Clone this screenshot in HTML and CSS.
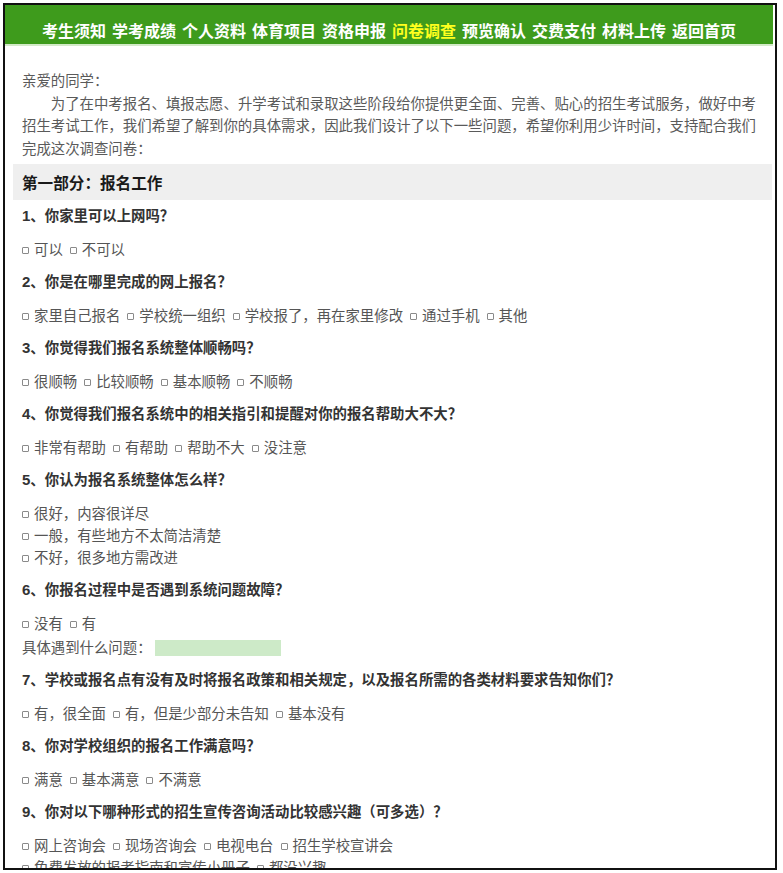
FILE: index.html
```html
<!DOCTYPE html>
<html lang="zh-CN">
<head>
<meta charset="utf-8">
<title>问卷调查</title>
<link rel="stylesheet" href="styles.css">
</head>
<body>
<div class="page">
  <nav class="topnav">
    <a>考生须知</a><a>学考成绩</a><a>个人资料</a><a>体育项目</a><a>资格申报</a><a class="active">问卷调查</a><a>预览确认</a><a>交费支付</a><a>材料上传</a><a>返回首页</a>
  </nav>
  <div class="content">
    <div class="intro">
      <p class="greet">亲爱的同学：</p>
      <p class="lead">为了在中考报名、填报志愿、升学考试和录取这些阶段给你提供更全面、完善、贴心的招生考试服务，做好中考招生考试工作，我们希望了解到你的具体需求，因此我们设计了以下一些问题，希望你利用少许时间，支持配合我们完成这次调查问卷：</p>
    </div>
    <h2 class="section">第一部分：报名工作</h2>
    <div class="qlist">
      <div class="q">
        <p class="qt"><span class="num">1</span>、你家里可以上网吗？</p>
        <div class="opts"><span class="opt"><i class="cb"></i>可以</span><span class="opt"><i class="cb"></i>不可以</span></div>
      </div>
      <div class="q">
        <p class="qt"><span class="num">2</span>、你是在哪里完成的网上报名？</p>
        <div class="opts"><span class="opt"><i class="cb"></i>家里自己报名</span><span class="opt"><i class="cb"></i>学校统一组织</span><span class="opt"><i class="cb"></i>学校报了，再在家里修改</span><span class="opt"><i class="cb"></i>通过手机</span><span class="opt"><i class="cb"></i>其他</span></div>
      </div>
      <div class="q">
        <p class="qt"><span class="num">3</span>、你觉得我们报名系统整体顺畅吗？</p>
        <div class="opts"><span class="opt"><i class="cb"></i>很顺畅</span><span class="opt"><i class="cb"></i>比较顺畅</span><span class="opt"><i class="cb"></i>基本顺畅</span><span class="opt"><i class="cb"></i>不顺畅</span></div>
      </div>
      <div class="q">
        <p class="qt"><span class="num">4</span>、你觉得我们报名系统中的相关指引和提醒对你的报名帮助大不大？</p>
        <div class="opts"><span class="opt"><i class="cb"></i>非常有帮助</span><span class="opt"><i class="cb"></i>有帮助</span><span class="opt"><i class="cb"></i>帮助不大</span><span class="opt"><i class="cb"></i>没注意</span></div>
      </div>
      <div class="q">
        <p class="qt"><span class="num">5</span>、你认为报名系统整体怎么样？</p>
        <div class="opts stack"><span class="opt"><i class="cb"></i>很好，内容很详尽</span><span class="opt"><i class="cb"></i>一般，有些地方不太简洁清楚</span><span class="opt"><i class="cb"></i>不好，很多地方需改进</span></div>
      </div>
      <div class="q">
        <p class="qt"><span class="num">6</span>、你报名过程中是否遇到系统问题故障？</p>
        <div class="block gap">
          <div class="opts"><span class="opt"><i class="cb"></i>没有</span><span class="opt"><i class="cb"></i>有</span></div>
          <div class="detail">具体遇到什么问题：<input class="field" type="text"></div>
        </div>
      </div>
      <div class="q">
        <p class="qt"><span class="num">7</span>、学校或报名点有没有及时将报名政策和相关规定，以及报名所需的各类材料要求告知你们？</p>
        <div class="opts"><span class="opt"><i class="cb"></i>有，很全面</span><span class="opt"><i class="cb"></i>有，但是少部分未告知</span><span class="opt"><i class="cb"></i>基本没有</span></div>
      </div>
      <div class="q">
        <p class="qt"><span class="num">8</span>、你对学校组织的报名工作满意吗？</p>
        <div class="opts"><span class="opt"><i class="cb"></i>满意</span><span class="opt"><i class="cb"></i>基本满意</span><span class="opt"><i class="cb"></i>不满意</span></div>
      </div>
      <div class="q">
        <p class="qt"><span class="num">9</span>、你对以下哪种形式的招生宣传咨询活动比较感兴趣（可多选）？</p>
        <div class="block">
          <div class="opts"><span class="opt"><i class="cb"></i>网上咨询会</span><span class="opt"><i class="cb"></i>现场咨询会</span><span class="opt"><i class="cb"></i>电视电台</span><span class="opt"><i class="cb"></i>招生学校宣讲会</span></div>
          <div class="opts"><span class="opt"><i class="cb"></i>免费发放的报考指南和宣传小册子</span><span class="opt"><i class="cb"></i>都没兴趣</span></div>
        </div>
      </div>
    </div>
  </div>
</div>
</body>
</html>
```
FILE: styles.css
```css
html, body {
  margin: 0;
  padding: 0;
  background: #ffffff;
}

body {
  font-family: "Noto Sans CJK SC", "Noto Sans", sans-serif;
  font-size: 14.4px;
  color: #555555;
}

.page {
  box-sizing: border-box;
  width: 774px;
  height: 867px;
  margin: 3px 0 0 3px;
  border: 2px solid #111111;
  overflow: hidden;
  background: #ffffff;
}

.topnav {
  display: flex;
  justify-content: center;
  gap: 6px;
  height: 41px;
  box-sizing: border-box;
  padding-top: 14px;
  margin-right: 2px;
  background: #3e9b1c;
  border-bottom: 2px solid #d3eac8;
  font-family: "Noto Sans CJK SC", sans-serif;
  font-weight: 700;
  font-size: 16px;
  line-height: 22px;
}

.topnav a {
  color: #ffffff;
  text-decoration: none;
  white-space: nowrap;
}

.topnav a.active {
  color: #ffff1e;
}

.content {
  padding: 0 3px 0 8px;
}

.intro {
  padding: 23px 9px 5px;
  line-height: 22.6px;
  color: #5a5a5a;
}

.intro p {
  margin: 0;
}

.lead {
  text-indent: 2em;
}

.section {
  margin: 0;
  height: 36px;
  padding: 0 9px;
  background: #efefef;
  font-size: 15.6px;
  font-weight: 700;
  line-height: 36px;
  color: #1a1a1a;
}

.qlist {
  display: flex;
  flex-direction: column;
  gap: 11px;
  padding: 5px 9px 0;
}

.q {
  display: flex;
  flex-direction: column;
  gap: 11px;
}

.qt {
  margin: 0;
  line-height: 22px;
  font-family: "Liberation Sans", "Noto Sans CJK SC", sans-serif;
  font-weight: 700;
  color: #333333;
}

.num {
  font-family: "Liberation Sans", sans-serif;
  font-size: 15px;
}

.opts {
  display: flex;
  flex-wrap: wrap;
  column-gap: 7px;
  line-height: 22px;
  color: #555555;
}

.opts.stack {
  flex-direction: column;
}

.opt {
  display: inline-flex;
  align-items: center;
  white-space: nowrap;
}

.cb {
  display: inline-block;
  box-sizing: border-box;
  width: 7px;
  height: 7px;
  margin: 2px 5px 0 0;
  border: 1px solid #8a8a8a;
  border-radius: 1px;
  background: #ffffff;
}

.block {
  display: flex;
  flex-direction: column;
}

.block.gap {
  gap: 2px;
}

.detail {
  display: flex;
  align-items: center;
  line-height: 22px;
  color: #555555;
}

.field {
  box-sizing: border-box;
  width: 126px;
  height: 16px;
  margin: 1px 0 0 3px;
  padding: 0;
  border: none;
  background: #cdeac8;
}
```
